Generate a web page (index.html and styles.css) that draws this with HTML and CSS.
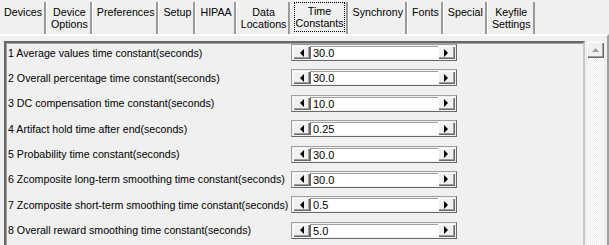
FILE: index.html
```html
<!DOCTYPE html>
<html lang="en">
<head>
    <meta charset="UTF-8">
    <title>Time Constants</title>
    <link rel="stylesheet" href="styles.css">
</head>
<body>
    <div class="tabs">
        <div class="tab">Devices</div>
        <div class="tab">Device<br>Options</div>
        <div class="tab">Preferences</div>
        <div class="tab">Setup</div>
        <div class="tab">HIPAA</div>
        <div class="tab">Data<br>Locations</div>
        <div class="tab selected"><span class="focus">Time<br>Constants</span></div>
        <div class="tab">Synchrony</div>
        <div class="tab">Fonts</div>
        <div class="tab">Special</div>
        <div class="tab">Keyfile<br>Settings</div>
    </div>

    <div class="page">
        <div class="panel">
            <div class="row">
                <div class="label">1 Average values time constant(seconds)</div>
                <div class="spinner">
                    <div class="btn"><svg width="5" height="8"><polygon points="5,0 5,8 1,4"/></svg></div>
                    <div class="field">30.0</div>
                    <div class="btn"><svg width="5" height="8"><polygon points="0,0 0,8 4,4"/></svg></div>
                </div>
            </div>
            <div class="row">
                <div class="label">2 Overall percentage time constant(seconds)</div>
                <div class="spinner">
                    <div class="btn"><svg width="5" height="8"><polygon points="5,0 5,8 1,4"/></svg></div>
                    <div class="field">30.0</div>
                    <div class="btn"><svg width="5" height="8"><polygon points="0,0 0,8 4,4"/></svg></div>
                </div>
            </div>
            <div class="row">
                <div class="label">3 DC compensation time constant(seconds)</div>
                <div class="spinner">
                    <div class="btn"><svg width="5" height="8"><polygon points="5,0 5,8 1,4"/></svg></div>
                    <div class="field">10.0</div>
                    <div class="btn"><svg width="5" height="8"><polygon points="0,0 0,8 4,4"/></svg></div>
                </div>
            </div>
            <div class="row">
                <div class="label">4 Artifact hold time after end(seconds)</div>
                <div class="spinner">
                    <div class="btn"><svg width="5" height="8"><polygon points="5,0 5,8 1,4"/></svg></div>
                    <div class="field">0.25</div>
                    <div class="btn"><svg width="5" height="8"><polygon points="0,0 0,8 4,4"/></svg></div>
                </div>
            </div>
            <div class="row">
                <div class="label">5 Probability time constant(seconds)</div>
                <div class="spinner">
                    <div class="btn"><svg width="5" height="8"><polygon points="5,0 5,8 1,4"/></svg></div>
                    <div class="field">30.0</div>
                    <div class="btn"><svg width="5" height="8"><polygon points="0,0 0,8 4,4"/></svg></div>
                </div>
            </div>
            <div class="row">
                <div class="label">6 Zcomposite long-term smoothing time constant(seconds)</div>
                <div class="spinner">
                    <div class="btn"><svg width="5" height="8"><polygon points="5,0 5,8 1,4"/></svg></div>
                    <div class="field">30.0</div>
                    <div class="btn"><svg width="5" height="8"><polygon points="0,0 0,8 4,4"/></svg></div>
                </div>
            </div>
            <div class="row">
                <div class="label">7 Zcomposite short-term smoothing time constant(seconds)</div>
                <div class="spinner">
                    <div class="btn"><svg width="5" height="8"><polygon points="5,0 5,8 1,4"/></svg></div>
                    <div class="field">0.5</div>
                    <div class="btn"><svg width="5" height="8"><polygon points="0,0 0,8 4,4"/></svg></div>
                </div>
            </div>
            <div class="row">
                <div class="label">8 Overall reward smoothing time constant(seconds)</div>
                <div class="spinner">
                    <div class="btn"><svg width="5" height="8"><polygon points="5,0 5,8 1,4"/></svg></div>
                    <div class="field">5.0</div>
                    <div class="btn"><svg width="5" height="8"><polygon points="0,0 0,8 4,4"/></svg></div>
                </div>
            </div>
        </div>
        <div class="scrollbar">
            <div class="btn up"><svg width="7" height="4"><polygon points="0,4 7,4 3.5,0"/></svg></div>
        </div>
    </div>
</body>
</html>
```

FILE: styles.css
```css
body {
    margin: 0;
    width: 609px;
    height: 245px;
    overflow: hidden;
    background-color: #f0f0f0;
    font-family: 'Liberation Sans', Arial, sans-serif;
    font-size: 10.7px;
    color: #000;
}
.tabs {
    display: flex;
    height: 34px;
    padding-top: 2px;
    box-sizing: border-box;
}
.tab {
    box-sizing: border-box;
    height: 32px;
    padding: 4px 2px 0 4px;
    line-height: 12px;
    text-align: center;
    border-left: 1px solid #fff;
    border-right: 2px solid #9a9a9a;
}
.tab:first-child {
    border-left: none;
}
.tab.selected {
    padding: 0 1px 0 3px;
}
.focus {
    display: block;
    height: 30px;
    padding: 3px 1px 0;
    box-sizing: border-box;
    outline: 1px dotted #000;
    outline-offset: -1px;
}
.page {
    display: flex;
    height: 211px;
    padding: 5px 0 0 4px;
    box-sizing: border-box;
    border-top: 2px solid #fff;
    border-right: 2px solid #a0a0a0;
}
.panel {
    width: 581px;
    padding: 1px 0 0 2px;
    box-sizing: border-box;
    border-top: 2px solid #696969;
    border-left: 2px solid #696969;
    border-right: 2px solid #c8c8c8;
    box-shadow: inset 1px 1px #a0a0a0;
}
.row {
    display: flex;
    align-items: center;
    height: 17px;
    margin-bottom: 8.4px;
}
.label {
    flex: 0 0 283px;
    min-width: 0;
    font-size: 10.65px;
    white-space: nowrap;
}
.spinner {
    display: flex;
    width: 166px;
    height: 17px;
    padding: 1px;
    box-sizing: border-box;
    border: 1px solid #a0a0a0;
    border-right-color: #696969;
    border-bottom-color: #696969;
}
.btn {
    display: flex;
    align-items: center;
    justify-content: center;
    width: 17px;
    background-color: #f0f0f0;
    box-shadow: inset 1px 1px #fff, inset -1px -1px #696969, inset -2px -2px #a0a0a0;
}
.btn svg {
    fill: #000;
}
.field {
    flex: 1;
    padding-left: 2px;
    line-height: 13px;
    font-size: 11px;
    background-color: #fff;
    border-left: 1px solid #696969;
    border-top: 1px solid #a0a0a0;
}
.scrollbar {
    width: 17px;
    margin-left: 2px;
    background: repeating-conic-gradient(#fff 0 25%, #ececec 0 50%) 0 0 / 2px 2px;
}
.btn.up {
    width: 17px;
    height: 16px;
    margin-top: 1px;
}
.btn.up svg {
    fill: #a0a0a0;
}
```
